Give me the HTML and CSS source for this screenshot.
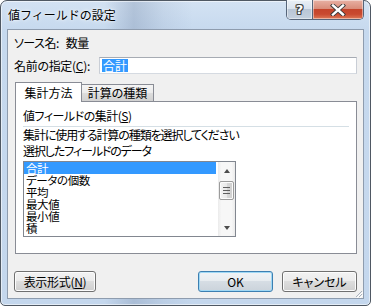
FILE: index.html
```html
<!DOCTYPE html>
<html lang="ja">
<head>
<meta charset="utf-8">
<link rel="stylesheet" href="styles.css">
</head>
<body>
<div class="window">
  <div class="titlebar">
    <span class="title">値フィールドの設定</span>
    <div class="caption-btns">
      <div class="cap help"><span class="help-glyph">?</span></div>
      <div class="cap close">
        <svg width="16" height="12" viewBox="0 0 16 12">
          <path d="M3 1.5 L13 10.5 M13 1.5 L3 10.5" stroke="#3a3a3a" stroke-width="4.2" stroke-linecap="square" fill="none"/>
          <path d="M3 1.5 L13 10.5 M13 1.5 L3 10.5" stroke="#ffffff" stroke-width="2.4" stroke-linecap="square" fill="none"/>
        </svg>
      </div>
    </div>
  </div>
  <div class="client">
    <div class="source-row"><span>ソース名:</span><span class="source-val">数量</span></div>
    <div class="name-row">
      <label class="name-label">名前の指定(<u>C</u>):</label>
      <div class="textbox"><span class="sel">合計</span></div>
    </div>
    <div class="tabs">
      <div class="tab active">集計方法</div>
      <div class="tab">計算の種類</div>
    </div>
    <div class="panel">
      <div class="group-title">値フィールドの集計(<u>S</u>)</div>
      <div class="sep"></div>
      <div class="desc">集計に使用する計算の種類を選択してください</div>
      <div class="desc">選択したフィールドのデータ</div>
      <div class="listbox">
        <ul class="items">
          <li class="selected">合計</li>
          <li>データの個数</li>
          <li>平均</li>
          <li>最大値</li>
          <li>最小値</li>
          <li>積</li>
        </ul>
        <div class="vscroll">
          <div class="arrow-btn"><span class="tri up"></span></div>
          <div class="track">
            <div class="thumb"><span class="grip"></span></div>
          </div>
          <div class="arrow-btn"><span class="tri down"></span></div>
        </div>
      </div>
    </div>
    <div class="buttons">
      <div class="btn fmt">表示形式(<u>N</u>)</div>
      <div class="btn ok">OK</div>
      <div class="btn cancel">キャンセル</div>
    </div>
    <svg class="grip-corner" width="8" height="8" viewBox="0 0 8 8">
      <path d="M7 1 L1 7 M7 4 L4 7" stroke="#a9b2bd" stroke-width="1" fill="none"/>
      <path d="M8 2 L2 8 M8 5 L5 8" stroke="#ffffff" stroke-width="1" fill="none"/>
    </svg>
  </div>
</div>
</body>
</html>
```

FILE: styles.css
```css
html, body {
  margin: 0;
  padding: 0;
  background: #ffffff;
}
body {
  width: 371px;
  height: 306px;
  overflow: hidden;
  font-family: "Noto Sans CJK JP", "Noto Sans", sans-serif;
  font-size: 12px;
  color: #000;
  font-feature-settings: "palt";
}
u { text-decoration: underline; text-underline-offset: 1px; }

.window {
  box-sizing: border-box;
  width: 371px;
  height: 306px;
  border: 1px solid #4f5863;
  border-radius: 7px 7px 5px 5px;
  background:
    linear-gradient(to right, rgba(255,255,255,0) 0%, rgba(120,140,170,0) 28%, rgba(120,140,170,0.35) 36%, rgba(120,140,170,0.12) 44%, rgba(255,255,255,0) 52%),
    linear-gradient(to bottom, #d3e2f3 0%, #c6d9ee 10%, #c4d7ed 100%);
  box-shadow: inset 0 0 0 1px rgba(255,255,255,0.55);
  padding: 0 6px 6px 6px;
  display: flex;
  flex-direction: column;
}

.titlebar {
  height: 28px;
  display: flex;
  align-items: flex-start;
}
.title {
  font-feature-settings: normal;
  margin-top: 6px;
  margin-left: 1px;
  line-height: 16px;
  color: #000;
  text-shadow: 0 0 5px rgba(255,255,255,0.9), 0 0 2px rgba(255,255,255,0.9);
}
.caption-btns {
  margin-left: auto;
  margin-top: -1px;
  display: flex;
  height: 20px;
  border: 1px solid #56657a;
  border-top: none;
  border-radius: 0 0 5px 5px;
  overflow: hidden;
  box-sizing: border-box;
}
.cap {
  height: 19px;
  display: flex;
  align-items: center;
  justify-content: center;
  box-shadow: inset 0 0 0 1px rgba(255,255,255,0.45);
}
.help {
  width: 25px;
  border-right: 1px solid #56657a;
  background: linear-gradient(to bottom, #e9eff6 0%, #d9e2ed 45%, #b9c6d6 50%, #c5d1df 100%);
}
.help-glyph {
  font-family: "DejaVu Sans", sans-serif;
  font-weight: bold;
  font-size: 13px;
  line-height: 13px;
  color: #fff;
  text-shadow: 1px 0 0 #444, -1px 0 0 #444, 0 1px 0 #444, 0 -1px 0 #444, 1px 1px 0 #444, -1px -1px 0 #444, 1px -1px 0 #444, -1px 1px 0 #444;
}
.close {
  width: 50px;
  background: linear-gradient(to bottom, #e8b1a4 0%, #d98d7b 45%, #c5442b 50%, #c94a30 75%, #de7a58 100%);
}

.client {
  position: relative;
  box-sizing: border-box;
  height: 270px;
  border: 1px solid #8e9cae;
  background: #f0f0f0;
  padding: 5px 6px 0 6px;
  display: flex;
  flex-direction: column;
}

.source-row {
  line-height: 16px;
  height: 16px;
  display: flex;
  letter-spacing: -0.5px;
}
.source-val { margin-left: 7px; }

.name-row {
  margin-top: 6px;
  display: flex;
  align-items: center;
  height: 17px;
}
.name-label {
  width: 85px;
  line-height: 16px;
  letter-spacing: -0.3px;
}
.textbox {
  flex: 1;
  box-sizing: border-box;
  height: 17px;
  border: 1px solid #abadb3;
  border-color: #a6abb3 #c9ced6 #d5dae1 #c9ced6;
  background: #fff;
  padding: 1px 2px;
  display: flex;
  align-items: center;
}
.sel {
  background: #3399ff;
  color: #fff;
  line-height: 13px;
  height: 13px;
  padding: 0 1px;
}

.tabs {
  margin-top: 8px;
  margin-left: 1px;
  display: flex;
  align-items: flex-end;
  height: 19px;
  position: relative;
  z-index: 1;
}
.tab {
  box-sizing: border-box;
  border: 1px solid #898c95;
  border-bottom: none;
  text-align: center;
}
.tab.active {
  width: 67px;
  height: 20px;
  margin-bottom: -1px;
  background: #fff;
  line-height: 19px;
  position: relative;
  z-index: 2;
}
.tab:not(.active) {
  width: 73px;
  height: 17px;
  margin-left: -1px;
  line-height: 16px;
  background: linear-gradient(to bottom, #f4f4f4 0%, #ebebeb 50%, #dddddd 50%, #d1d1d1 100%);
}

.panel {
  margin-left: 1px;
  box-sizing: border-box;
  height: 153px;
  border: 1px solid #898c95;
  background: #fff;
  padding: 6px 7px 0 7px;
  display: flex;
  flex-direction: column;
}
.group-title {
  line-height: 16px;
  height: 16px;
  letter-spacing: -0.5px;
}
.sep {
  margin-top: 2px;
  height: 1px;
  background: #d5dfe5;
}
.desc {
  line-height: 16px;
  height: 16px;
  letter-spacing: -1.1px;
}
.listbox {
  margin-top: 2px;
  box-sizing: border-box;
  width: 213px;
  height: 76px;
  border: 1px solid #828790;
  display: flex;
  background: #fff;
}
.items {
  list-style: none;
  margin: 0;
  padding: 0;
  width: 192px;
  margin-right: 2px;
}
.items li {
  height: 12px;
  line-height: 12px;
  padding-left: 2px;
  font-size: 11.5px;
  letter-spacing: -0.4px;
}
.items li.selected {
  background: #3399ff;
  color: #fff;
}
.vscroll {
  width: 17px;
  display: flex;
  flex-direction: column;
  background: linear-gradient(to right, #ebebeb 0%, #f7f7f7 20%, #f7f7f7 80%, #ebebeb 100%);
}
.arrow-btn {
  height: 17px;
  display: flex;
  align-items: center;
  justify-content: center;
}
.tri {
  width: 0;
  height: 0;
  border-left: 3.5px solid transparent;
  border-right: 3.5px solid transparent;
}
.tri.up { border-bottom: 4px solid #4d4d4d; }
.tri.down { border-top: 4px solid #4d4d4d; }
.track {
  flex: 1;
  padding-top: 2px;
}
.thumb {
  box-sizing: border-box;
  width: 15px;
  height: 19px;
  margin-left: 1px;
  border: 1px solid #9b9b9b;
  border-radius: 2px;
  background: linear-gradient(to right, #f4f4f4 0%, #e9e9e9 50%, #d8d8d8 51%, #cfcfcf 100%);
  box-shadow: inset 0 0 0 1px #fbfbfb;
  display: flex;
  align-items: center;
  justify-content: center;
}
.grip {
  width: 7px;
  height: 5px;
  border-top: 1px solid #5f5f5f;
  border-bottom: 1px solid #5f5f5f;
  background: linear-gradient(to bottom, transparent 2px, #5f5f5f 2px, #5f5f5f 3px, transparent 3px);
}

.buttons {
  margin-top: 17px;
  display: flex;
  height: 21px;
}
.btn {
  box-sizing: border-box;
  height: 21px;
  border: 1px solid #707070;
  border-radius: 3px;
  background: linear-gradient(to bottom, #f2f2f2 0%, #ebebeb 50%, #dddddd 50%, #cfcfcf 100%);
  box-shadow: inset 0 0 0 1px #fcfcfc;
  text-align: center;
  line-height: 19px;
}
.btn.fmt { width: 82px; letter-spacing: -0.3px; }
.btn.ok {
  width: 75px;
  margin-left: auto;
  border-color: #3c7fb1;
  box-shadow: inset 0 0 0 1px #9fd8f5;
  background: linear-gradient(to bottom, #f0f3f6 0%, #e6ebef 50%, #d6dde4 50%, #cbd3db 100%);
}
.btn.cancel {
  width: 75px;
  margin-left: 9px;
}

.grip-corner {
  position: absolute;
  right: 0;
  bottom: 0;
}
```
